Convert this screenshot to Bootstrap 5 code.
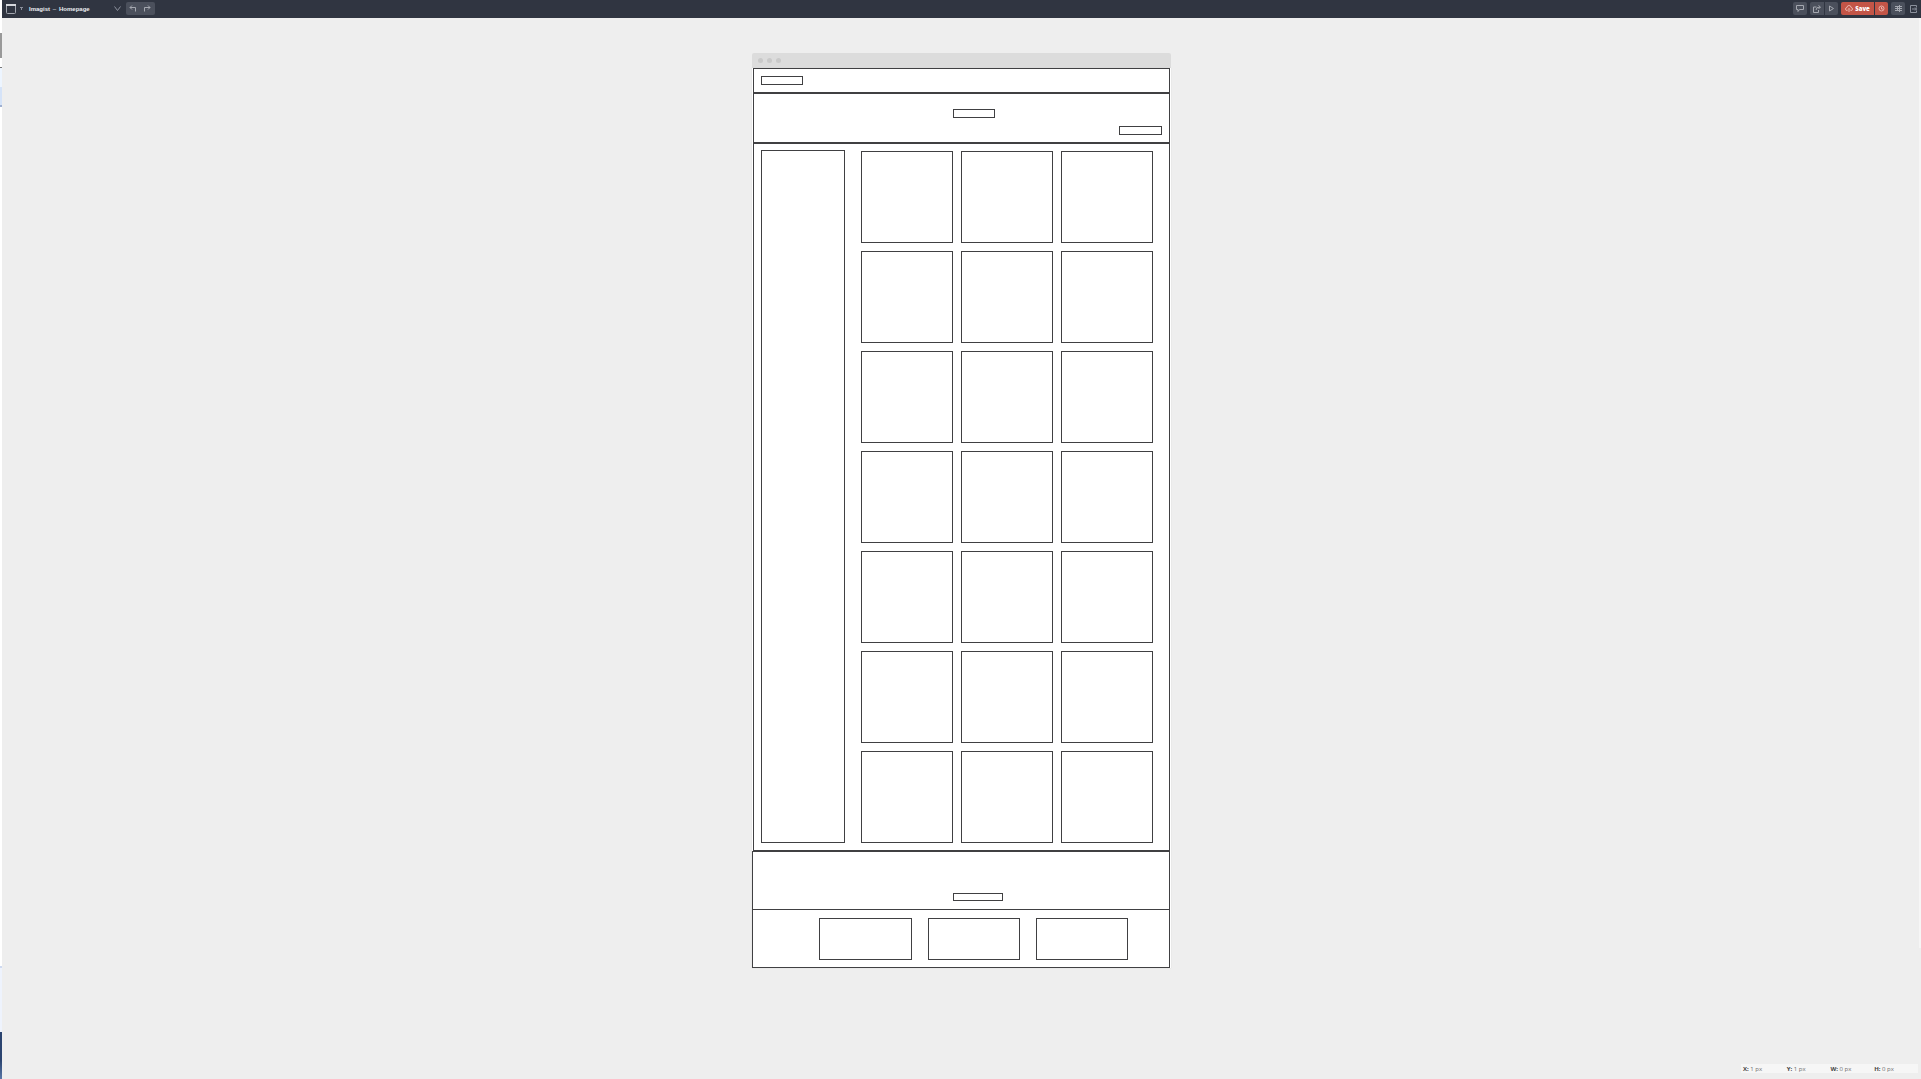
<!DOCTYPE html>
<html lang="en">
<head>
<meta charset="utf-8">
<meta name="viewport" content="width=device-width, initial-scale=1">
<title>Imagist – Homepage</title>
<link href="https://cdn.jsdelivr.net/npm/bootstrap@5.3.0/dist/css/bootstrap.min.css" rel="stylesheet">
<style>
  :root { --ink: #404042; --bar: #303541; --canvas: #eee; --tool: #4b505c; --save: #c35547; }
  body { font-family: "Open Sans", "Noto Sans", sans-serif; background: var(--canvas); }
  svg { display: block; fill: none; stroke: currentColor; }

  /* sliver of the window behind the editor */
  .behind { width: 2px; background: linear-gradient(#fff 0 33px, #999 33px 58px, #fff 58px 67px, #777 67px 68px, #edf5ff 68px 87px, #d5e3f8 87px 105px, #9fb0d0 105px 107px, #fff 107px 966px, #cfdaf0 966px 968px, #eef3fd 968px 1032px, #2b4470 1032px 1060px, #5a78a8 1079px); }
  .edge { width: 2px; margin-top: 18px; background: linear-gradient(#f6f6f6 0 930px, transparent 930px); }

  .topbar { height: 18px; background: var(--bar); color: #eceef2; font-family: "Liberation Sans", Arial, sans-serif; font-size: 6px; line-height: 14px; padding: 1px 4px 2px; }
  .topbar button { height: 13px; padding: 0; border: 0; color: #a5a8b0; background: var(--tool); display: flex; align-items: center; justify-content: center; }
  .topbar .plain { background: none; color: #8b909c; }
  .crumbs { margin: 0 24px 0 6px; }
  .crumb { color: inherit; text-decoration: none; font-weight: 700; }
  .crumb-gap { width: 9px; text-align: center; }
  .history { margin-left: 5px; }
  .actions { gap: 3px; }
  .round-l { border-radius: 2px 0 0 2px; }
  .round-r { border-radius: 0 2px 2px 0; }
  .round-all { border-radius: 2px; }
  .tool-w { width: 14px; }
  .tool-m { width: 13px; }
  .tool-l { width: 15px; }
  .topbar .save { background: var(--save); color: #e9b3ab; }
  .topbar .save-main { width: 33px; gap: 2px; }
  .save-main span { font-family: "Open Sans", sans-serif; font-size: 6px; font-weight: 800; color: #fff; line-height: 12px; }
  .split { gap: 1px; }
  .exit { margin-left: 2px; }

  .browser { width: 419px; margin-top: 35px; }
  .chrome { height: 15px; background: #dcdcdc; border-radius: 2px 2px 0 0; padding: 0 6px; gap: 4px; }
  .chrome i { width: 5px; height: 5px; border-radius: 50%; background: #c9c9c9; }
  .sheet { background: #fff; box-shadow: 0 0 1px #ccc; padding-right: 1px; }
  .frame, .slot { border: 1px solid var(--ink); }
  .upper { margin-left: 1px; }
  .site-nav { height: 25px; padding: 7px; }
  .hero { height: 50px; padding: 15px 7px 7px; }
  .slot-s { width: 42px; height: 9px; }
  .hero .mid { margin-left: 192px; }
  .hero .low { width: 43px; margin-top: 8px; }
  .main-area { padding: 6px 16px 7px 7px; gap: 16px; }
  .side { width: 84px; }
  .tiles { flex: 1; display: grid; grid-template-columns: repeat(3, 1fr); gap: 8px; padding-top: 1px; }
  .tiles .slot { height: 92px; }
  .pre-footer { height: 58px; padding: 0 0 8px 200px; border-bottom: 0; }
  .pre-footer .slot { width: 50px; height: 8px; }
  .site-footer { padding: 8px 41px 7px 66px; gap: 16px; }
  .site-footer .slot { width: 92px; height: 42px; }
  .site-footer .slot:first-child { flex: 1; }

  .readout { position: fixed; right: 3px; bottom: 6px; width: 177px; height: 9px; padding-left: 2px; background: #f6f6f6; color: #6c6c6c; font-size: 6px; line-height: 11px; }
  .readout b { color: #444; }
</style>
<script src="https://cdn.jsdelivr.net/npm/bootstrap@5.3.0/dist/js/bootstrap.bundle.min.js"></script>
</head>
<body>
<div class="d-flex min-vh-100">
  <div class="behind flex-shrink-0"></div>
  <div class="flex-grow-1 d-flex flex-column">
    <header class="topbar d-flex align-items-center">
      <button class="plain" aria-label="Pages"><svg width="10" height="10" viewBox="0 0 10 10"><rect x=".5" y=".5" width="9" height="9" rx="1" stroke="#a4a8b1"/><path d="M0 1h10" stroke="#d5d7dc" stroke-width="2"/></svg></button>
      <button class="plain ms-1" aria-label="Page menu"><svg width="3" height="3" viewBox="0 0 3 3"><path d="M0 .5h3M1.500 1v2"/></svg></button>
      <nav class="crumbs d-flex" aria-label="Breadcrumb"><a class="crumb" href="#">Imagist</a><span class="crumb-gap">–</span><a class="crumb" href="#">Homepage</a></nav>
      <button class="plain" aria-label="Choose page"><svg width="7" height="5" viewBox="0 0 7 5"><path d="M.5 .5l3 4 3-4"/></svg></button>
      <div class="history d-flex">
        <button class="tool-w round-l" aria-label="Undo"><svg width="8" height="7" viewBox="0 0 8 7"><path d="M3 .5L1 2.500l2 2M1 2.500h5.500v4"/></svg></button>
        <button class="tool-l round-r" aria-label="Redo"><svg width="8" height="7" viewBox="0 0 8 7"><path d="M5 .5l2 2-2 2M7 2.500H1.500v4"/></svg></button>
      </div>
      <div class="actions d-flex ms-auto">
        <button class="tool-w round-all" aria-label="Comments"><svg width="8" height="7" viewBox="0 0 8 7"><path d="M.5 .5h7v4h-4l-1.500 2v-2H.5z"/></svg></button>
        <div class="d-flex split">
          <button class="tool-w round-l" aria-label="Share"><svg width="8" height="8" viewBox="0 0 8 8"><path d="M3.500 2H.5v5.500h5V5M3 5q0-3 4-3M5.500 .5L7.500 2l-2 2"/></svg></button>
          <button class="tool-m round-r" aria-label="Preview"><svg width="5" height="7" viewBox="0 0 5 7"><path d="M.5 1l4 2.500-4 2.500z"/></svg></button>
        </div>
        <div class="d-flex split">
          <button class="save save-main round-l"><svg width="8" height="7" viewBox="0 0 8 7"><path d="M2.500 5.500H2A1.500 1.500 0 0 1 2 2.500a2 2 0 0 1 4 0 1.500 1.500 0 0 1 0 3h-.5M4 7V3.500M3 4.500l1-1 1 1"/></svg><span>Save</span></button>
          <button class="save tool-m round-r" aria-label="Save options"><svg width="7" height="7" viewBox="0 0 7 7"><circle cx="3.500" cy="3.500" r="2.500"/><path d="M3.500 2v2h1.500"/></svg></button>
        </div>
        <button class="tool-w round-all" aria-label="Settings"><svg width="7" height="7" viewBox="0 0 7 7"><path d="M0 1.500h7M0 3.500h7M0 5.500h7M4.500 0v3M2.500 2v3M4.500 4v3"/></svg></button>
        <button class="plain exit" aria-label="Exit"><svg width="7" height="8" viewBox="0 0 7 8"><path d="M6.500 2.500v-2h-6v7h6v-2M2 4h5M5 2.500L6.500 4 5 5.500"/></svg></button>
      </div>
    </header>

    <main class="browser mx-auto">
      <div class="chrome d-flex align-items-center"><i></i><i></i><i></i></div>
      <div class="sheet">
        <div class="upper">
          <div class="frame site-nav"><div class="slot slot-s"></div></div>
          <div class="frame hero">
            <div class="slot slot-s mid"></div>
            <div class="slot slot-s low ms-auto"></div>
          </div>
          <div class="frame main-area d-flex">
            <div class="slot side"></div>
            <div class="tiles">
              <div class="slot"></div><div class="slot"></div><div class="slot"></div>
              <div class="slot"></div><div class="slot"></div><div class="slot"></div>
              <div class="slot"></div><div class="slot"></div><div class="slot"></div>
              <div class="slot"></div><div class="slot"></div><div class="slot"></div>
              <div class="slot"></div><div class="slot"></div><div class="slot"></div>
              <div class="slot"></div><div class="slot"></div><div class="slot"></div>
              <div class="slot"></div><div class="slot"></div><div class="slot"></div>
            </div>
          </div>
        </div>
        <div class="frame pre-footer d-flex align-items-end"><div class="slot"></div></div>
        <div class="frame site-footer d-flex"><div class="slot"></div><div class="slot"></div><div class="slot"></div></div>
      </div>
    </main>
  </div>
</div>
<div class="edge position-fixed top-0 end-0 h-100"></div>
<div class="readout d-flex">
  <div class="col-3"><b>X:</b> 1 px</div><div class="col-3"><b>Y:</b> 1 px</div><div class="col-3"><b>W:</b> 0 px</div><div class="col-3"><b>H:</b> 0 px</div>
</div>
</body>
</html>
